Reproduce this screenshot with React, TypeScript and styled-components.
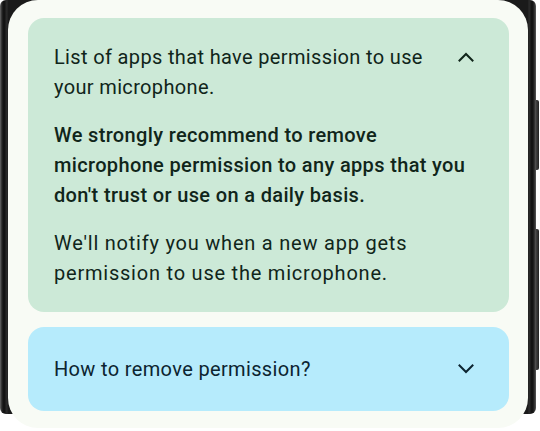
import React from "react";
import styled, { createGlobalStyle } from "styled-components";

const Global = createGlobalStyle`
  html, body { margin: 0; padding: 0; background: #ffffff; }
  body { font-family: Roboto, "Noto Sans", "Liberation Sans", sans-serif; }
  * { box-sizing: border-box; }
`;

const Stage = styled.div`
  width: 540px;
  height: 431px;
  padding-top: 8px;
  overflow: hidden;
`;

const Frame = styled.div`
  position: relative;
  width: 536px;
  height: 414px;
  padding: 0 8px;
  border-radius: 6px;
  background: linear-gradient(
    to right,
    #6a6a6a 0px,
    #262626 2px,
    #0e0e0e 4px,
    #2e2e2e 7px,
    #1a1a1a 8px,
    #1a1a1a 528px,
    #2e2e2e 529px,
    #0e0e0e 532px,
    #262626 534px,
    #5a5a5a 536px
  );
`;

const SideButton = styled.div<{ $top: number; $h: number }>`
  position: absolute;
  right: -3px;
  top: ${(p) => p.$top}px;
  width: 3px;
  height: ${(p) => p.$h}px;
  background: linear-gradient(to right, #444, #222);
  border-radius: 0 2px 2px 0;
`;

const Sheet = styled.div`
  margin: -8px 0 0;
  height: 428px;
  background: #f8fbf5;
  border-radius: 30px;
  padding: 18px 19px 0 20px;
  display: flex;
  flex-direction: column;
  gap: 15px;
`;

const Card = styled.div<{ $bg: string; $fg: string; $pad: number }>`
  background: ${(p) => p.$bg};
  color: ${(p) => p.$fg};
  border-radius: 16px;
  padding: ${(p) => p.$pad}px 26px ${(p) => p.$pad}px 26px;
  display: flex;
  flex-direction: column;
  gap: 18px;
`;

const Header = styled.div<{ $center?: boolean }>`
  display: flex;
  align-items: ${(p) => (p.$center ? "center" : "flex-start")};
  gap: 16px;
  padding-right: 9px;
`;

const Title = styled.div`
  flex: 1;
  font-size: 20px;
  line-height: 30px;
  letter-spacing: 0.35px;
  font-weight: 400;
`;

const IconBox = styled.div`
  width: 16px;
  height: 30px;
  display: flex;
  align-items: center;
  justify-content: center;
  flex: none;
`;

const Para = styled.p<{ $strong?: boolean; $spacing: number }>`
  margin: 0;
  font-size: 20px;
  line-height: 30px;
  letter-spacing: ${(p) => p.$spacing}px;
  font-weight: ${(p) => (p.$strong ? 500 : 400)};
`;

const Chevron = ({ up }: { up?: boolean }) => (
  <svg width="16" height="10" viewBox="0 0 16 10" fill="none">
    <polyline
      points={up ? "1.5,8.5 8,2 14.5,8.5" : "1.5,1.5 8,8 14.5,1.5"}
      stroke="currentColor"
      strokeWidth="2"
      strokeLinecap="square"
    />
  </svg>
);

export default function App() {
  return (
    <>
      <Global />
      <Stage>
        <Frame>
          <SideButton $top={100} $h={70} />
          <SideButton $top={229} $h={141} />
          <Sheet>
            <Card $bg="#cce9d7" $fg="#10251a" $pad={24}>
              <Header>
                <Title>List of apps that have permission to use your microphone.</Title>
                <IconBox>
                  <Chevron up />
                </IconBox>
              </Header>
              <Para $strong $spacing={0.35}>
                We strongly recommend to remove microphone permission to any apps that you
                don't trust or use on a daily basis.
              </Para>
              <Para $spacing={0.78}>
                We'll notify you when a new app gets permission to use the microphone.
              </Para>
            </Card>
            <Card $bg="#b6ebfc" $fg="#0c2430" $pad={27}>
              <Header $center>
                <Title>How to remove permission?</Title>
                <IconBox>
                  <Chevron />
                </IconBox>
              </Header>
            </Card>
          </Sheet>
        </Frame>
      </Stage>
    </>
  );
}
